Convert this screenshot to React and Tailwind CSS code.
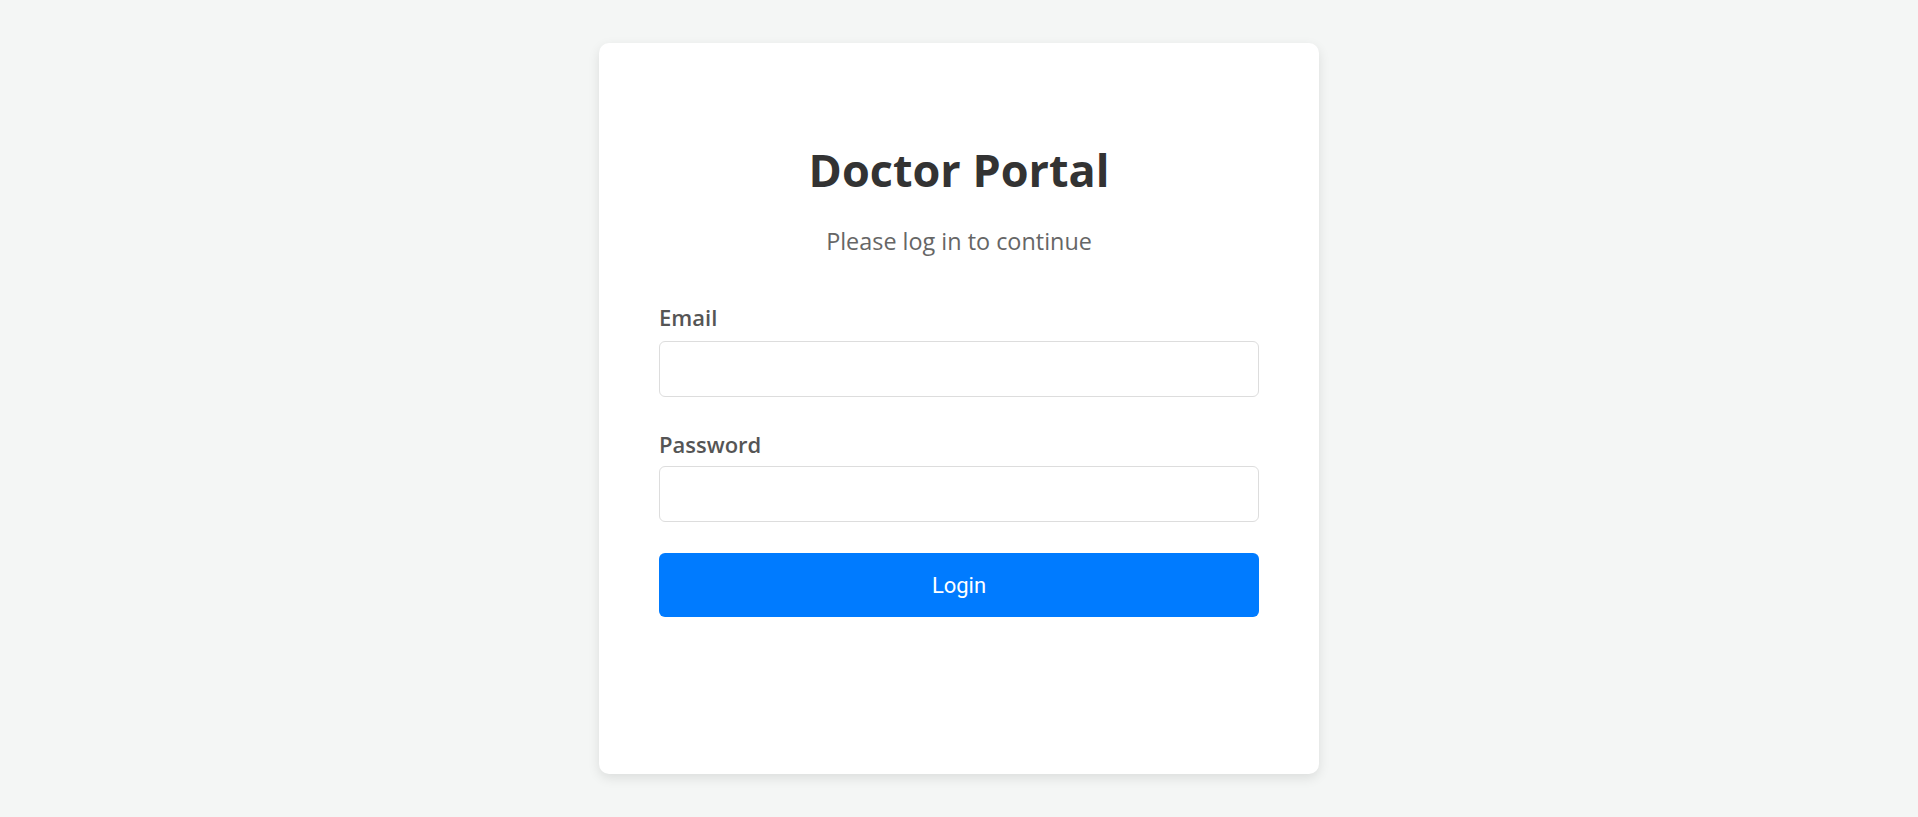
export default function App() {
  return (
    <div className="min-h-screen w-full bg-[#f4f6f5] flex items-center justify-center" style={{ fontFamily: '"Open Sans", "Noto Sans", sans-serif' }}>
      <div className="w-[720px] bg-white rounded-[10px] shadow-[0_4px_12px_rgba(0,0,0,0.1)] px-[60px] pt-[100px] pb-[157px]">
        <h1 className="text-center text-[45px] leading-[54px] font-bold text-[#333]">Doctor Portal</h1>
        <p className="mt-[28px] text-center text-[23.4px] leading-[32px] text-[#666]">Please log in to continue</p>
        <div className="mt-[45px]">
          <label className="block text-[22px] leading-[30px] font-semibold text-[#555]">Email</label>
          <input type="email" className="mt-[9px] block w-full h-[56px] border border-[#ddd] rounded-[6px] bg-white outline-none" />
        </div>
        <div className="mt-[32px]">
          <label className="block text-[22px] leading-[30px] font-semibold text-[#555]">Password</label>
          <input type="password" className="mt-[7px] block w-full h-[56px] border border-[#ddd] rounded-[6px] bg-white outline-none" />
        </div>
        <button className="mt-[31px] block w-full h-[64px] rounded-[6px] bg-[#007bff] text-white text-[22px]" style={{ fontFamily: 'Roboto, "Liberation Sans", Arial, sans-serif' }}>Login</button>
      </div>
    </div>
  );
}
